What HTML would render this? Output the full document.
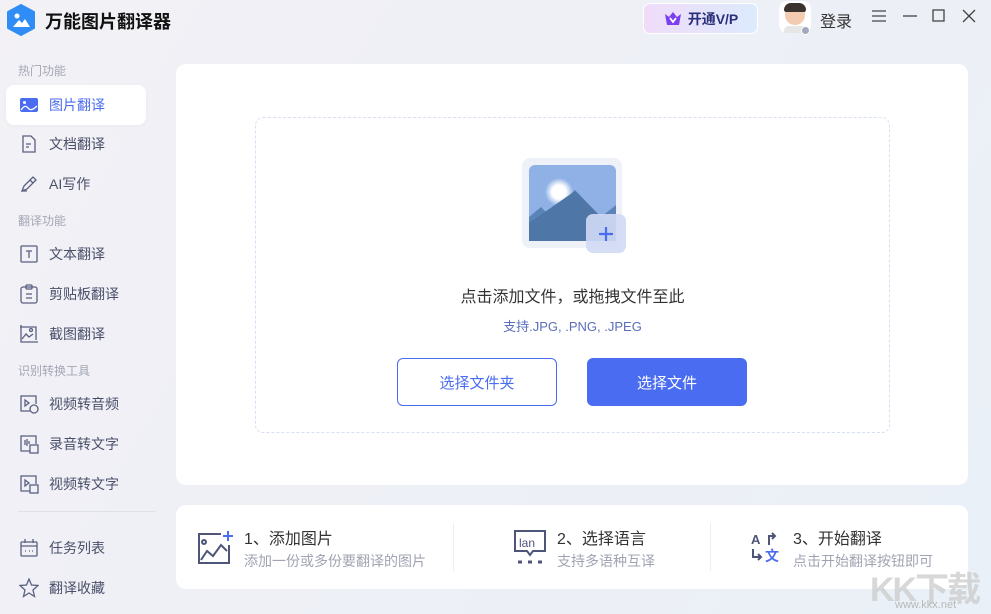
<!DOCTYPE html>
<html><head><meta charset="utf-8"><style>
*{margin:0;padding:0;box-sizing:border-box}
body{width:991px;height:614px;overflow:hidden;font-family:"Liberation Sans","Noto Sans CJK SC",sans-serif;background:linear-gradient(120deg,#f3f1f6 0%,#eef0f6 40%,#eaf0f7 100%);position:relative;color:#333}
.abs{position:absolute}
.sec{position:absolute;left:18px;font-size:12px;color:#a3a7b4}
.item{position:absolute;left:6px;width:140px;height:40px;border-radius:8px;display:flex;align-items:center;padding-left:13px;font-size:14px;color:#4a4f6a}
.item svg{width:20px;height:20px;margin-right:10px;flex:none}
.item.act{background:#fff;color:#4a6cf0;box-shadow:0 1px 4px rgba(0,0,0,.04)}
.card{position:absolute;background:#fff;border-radius:10px}
.btn{position:absolute;width:160px;height:48px;border-radius:6px;font-size:15px;display:flex;align-items:center;justify-content:center}
.step{position:absolute;top:525px}
.step .t{font-size:16px;color:#333}
.step .s{font-size:14px;color:#a0a4b2;margin-top:2px}
</style></head><body>
<svg class="abs" style="left:6px;top:4px" width="30" height="32" viewBox="0 0 30 32"><path d="M15 1 L28 8 L28 24 L15 31 L2 24 L2 8Z" fill="#2f8df5" stroke="#2f8df5" stroke-width="2" stroke-linejoin="round"/><circle cx="11" cy="12" r="2.5" fill="#fff"/><path d="M7 23 L13 16 L16 19 L19 15 L24 23Z" fill="#fff"/></svg>
<div class="abs" style="left:45px;top:8px;font-size:18px;font-weight:bold;color:#111">万能图片翻译器</div>
<div class="abs" style="left:643px;top:3px;width:115px;height:31px;border-radius:7px;background:linear-gradient(90deg,#f0dcfa,#dceafc);display:flex;align-items:center;justify-content:center;font-weight:bold;font-size:14px;color:#2a2f7a;border:1px solid #fff"><svg width="20" height="16" viewBox="0 0 20 16" style="margin-right:5px"><path d="M2 3 L6 6 L10 1 L14 6 L18 3 L16 14 L4 14Z" fill="#7b3ff0"/><path d="M7 7 L10 11 L13 7" stroke="#fff" stroke-width="1.8" fill="none"/></svg>开通V/P</div>
<div class="abs" style="left:779px;top:1px;width:32px;height:32px;border-radius:8px;background:#fff;overflow:hidden"><div class="abs" style="left:6px;top:4px;width:20px;height:20px;border-radius:50%;background:#f3cbb1"></div><div class="abs" style="left:5px;top:2px;width:22px;height:9px;border-radius:10px 10px 3px 3px;background:#3a3330"></div><div class="abs" style="left:5px;top:25px;width:22px;height:10px;border-radius:8px;background:#e6e6e6"></div></div>
<div class="abs" style="left:801px;top:26px;width:9px;height:9px;border-radius:50%;background:#a0a8bc;border:1px solid #fff"></div>
<div class="abs" style="left:820px;top:8px;font-size:16px;color:#333">登录</div>
<svg class="abs" style="left:871px;top:9px" width="16" height="14"><path d="M1 2H15M1 7H15M1 12H15" stroke="#444" stroke-width="1.3"/></svg>
<svg class="abs" style="left:902px;top:9px" width="16" height="14"><path d="M1 7H15" stroke="#444" stroke-width="1.3"/></svg>
<svg class="abs" style="left:932px;top:9px" width="14" height="14"><rect x="1" y="1" width="11" height="11" stroke="#444" stroke-width="1.3" fill="none"/></svg>
<svg class="abs" style="left:962px;top:9px" width="14" height="14"><path d="M1 1L13 13M13 1L1 13" stroke="#444" stroke-width="1.3"/></svg>
<div class="sec" style="top:62px">热门功能</div>
<div class="item act" style="top:85px"><svg viewBox="0 0 20 20"><rect x="1" y="3" width="18" height="14" rx="2" fill="#4a6cf0"/><circle cx="5.5" cy="7.5" r="1.5" fill="#fff"/><path d="M2 15 Q6 9 9 13 T18 11" stroke="#fff" stroke-width="1.3" fill="none"/></svg>图片翻译</div>
<div class="item" style="top:124px"><svg viewBox="0 0 20 20" fill="none" stroke="#5a6080" stroke-width="1.3"><path d="M4 2H12L16 6V18H4Z"/><path d="M7 10H12M7 13H10"/></svg>文档翻译</div>
<div class="item" style="top:164px"><svg viewBox="0 0 20 20" fill="none" stroke="#5a6080" stroke-width="1.3"><path d="M3 17L5 12L14 3L17 6L8 15Z M3 17H8 M11 6L14 9"/></svg>AI写作</div>
<div class="sec" style="top:212px">翻译功能</div>
<div class="item" style="top:234px"><svg viewBox="0 0 20 20" fill="none" stroke="#5a6080" stroke-width="1.3"><rect x="2" y="2" width="16" height="16" rx="1"/><path d="M7 7H13M10 7V14"/></svg>文本翻译</div>
<div class="item" style="top:274px"><svg viewBox="0 0 20 20" fill="none" stroke="#5a6080" stroke-width="1.3"><rect x="2" y="3" width="16" height="16" rx="2"/><rect x="7" y="1" width="6" height="4" rx="1"/><path d="M7 10H13M7 14H13"/></svg>剪贴板翻译</div>
<div class="item" style="top:314px"><svg viewBox="0 0 20 20" fill="none" stroke="#5a6080" stroke-width="1.3"><path d="M2 1V18H19M1 3H17V16"/><path d="M3 15L7 10L10 13L14 10"/><circle cx="12" cy="6" r="1.5"/></svg>截图翻译</div>
<div class="sec" style="top:362px">识别转换工具</div>
<div class="item" style="top:384px"><svg viewBox="0 0 20 20" fill="none" stroke="#5a6080" stroke-width="1.3"><path d="M11 17H2V2H17V10"/><path d="M6 6L10 9L6 12Z"/><circle cx="15" cy="15" r="4"/></svg>视频转音频</div>
<div class="item" style="top:424px"><svg viewBox="0 0 20 20" fill="none" stroke="#5a6080" stroke-width="1.3"><path d="M11 17H2V2H17V10"/><path d="M6 6V11M8 5V12M10 7V10"/><rect x="11" y="11" width="8" height="8"/></svg>录音转文字</div>
<div class="item" style="top:464px"><svg viewBox="0 0 20 20" fill="none" stroke="#5a6080" stroke-width="1.3"><path d="M11 17H2V2H17V10"/><path d="M6 6L10 9L6 12Z"/><rect x="11" y="11" width="8" height="8"/></svg>视频转文字</div>
<div class="abs" style="left:18px;top:511px;width:138px;height:1px;background:#dde2ea"></div>
<div class="item" style="top:528px"><svg viewBox="0 0 20 20" fill="none" stroke="#5a6080" stroke-width="1.3"><rect x="2" y="4" width="16" height="14" rx="1"/><path d="M2 8H18M6 1V5M14 1V5M6 13H7M10 13H11M13 13H14"/></svg>任务列表</div>
<div class="item" style="top:568px"><svg viewBox="0 0 20 20" fill="none" stroke="#5a6080" stroke-width="1.3"><path d="M10 1L12.5 7L19 7.5L14 12L15.5 18.5L10 15L4.5 18.5L6 12L1 7.5L7.5 7Z"/></svg>翻译收藏</div>
<div class="card" style="left:176px;top:64px;width:792px;height:421px"></div>
<div class="abs" style="left:255px;top:117px;width:635px;height:316px;border:1px dashed #d6dff5;border-radius:8px"></div>
<div class="abs" style="left:522px;top:158px;width:100px;height:90px;border-radius:8px;background:#eef1f7"></div>
<svg class="abs" style="left:529px;top:165px" width="87" height="76" viewBox="0 0 87 76"><defs><radialGradient id="g"><stop offset=".5" stop-color="#fff"/><stop offset="1" stop-color="#fff" stop-opacity="0"/></radialGradient></defs><rect width="87" height="76" rx="6" fill="#8fb1e6"/><circle cx="30" cy="27" r="14" fill="url(#g)"/><path d="M0 52L12 42L20 50L46 25L72 52L87 40V76H0Z" fill="#5a84b8"/><path d="M0 76V58L46 26L80 60L87 76Z" fill="#4e77a8"/></svg>
<div class="abs" style="left:586px;top:214px;width:40px;height:39px;border-radius:7px;background:rgba(210,218,245,.9)"></div>
<svg class="abs" style="left:596px;top:224px" width="20" height="20"><path d="M10 3V17M3 10H17" stroke="#4a6cf0" stroke-width="2.2"/></svg>
<div class="abs" style="left:255px;width:635px;top:283px;text-align:center;font-size:16px;color:#333">点击添加文件，或拖拽文件至此</div>
<div class="abs" style="left:255px;width:635px;top:316px;text-align:center;font-size:13px;color:#5a6fb8">支持.JPG, .PNG, .JPEG</div>
<div class="btn" style="left:397px;top:358px;border:1px solid #4a6cf0;color:#4a6cf0;background:#fff">选择文件夹</div>
<div class="btn" style="left:587px;top:358px;background:#4a6cf0;color:#fff">选择文件</div>
<div class="card" style="left:176px;top:505px;width:792px;height:84px"></div>
<div class="abs" style="left:453px;top:523px;width:1px;height:48px;background:#eceef2"></div>
<div class="abs" style="left:710px;top:523px;width:1px;height:48px;background:#eceef2"></div>
<svg class="abs" style="left:197px;top:529px" width="40" height="36" viewBox="0 0 40 36" fill="none" stroke="#4e5578" stroke-width="2"><path d="M24 5H2V34H32V16"/><circle cx="7" cy="13" r="2"/><path d="M4 31L10 22L16 27L24 16L30 22"/><path d="M31 2V12M26 7H36" stroke="#4a6cf0"/></svg>
<div class="step" style="left:244px"><div class="t">1、添加图片</div><div class="s">添加一份或多份要翻译的图片</div></div>
<svg class="abs" style="left:513px;top:529px" width="34" height="36" viewBox="0 0 34 36" fill="none" stroke="#4e5578" stroke-width="2"><path d="M2 2H32V22H20L17 26L14 22H2Z"/><text x="6" y="18" font-size="12" fill="#4e5578" stroke="none" font-family="Liberation Sans">lan</text><path d="M5 33H9M15 33H19M25 33H29" stroke-width="3"/></svg>
<div class="step" style="left:557px"><div class="t">2、选择语言</div><div class="s">支持多语种互译</div></div>
<svg class="abs" style="left:749px;top:529px" width="34" height="36" viewBox="0 0 34 36" fill="none" stroke="#4e5578" stroke-width="2"><text x="2" y="15" font-size="13" font-weight="bold" fill="#4e5578" stroke="none" font-family="Liberation Sans">A</text><path d="M20 16V7H26M23 4L26 7L23 10"/><path d="M4 20V28H12M9 25L12 28L9 31"/><text x="16" y="32" font-size="14" font-weight="bold" fill="#4a6cf0" stroke="none" font-family="Noto Sans CJK SC">文</text></svg>
<div class="step" style="left:793px"><div class="t">3、开始翻译</div><div class="s">点击开始翻译按钮即可</div></div>
<div class="abs" style="left:870px;top:562px;font-size:34px;font-weight:bold;color:rgba(200,200,200,.7);letter-spacing:-2px">KK下载</div>
<div class="abs" style="left:895px;top:599px;font-size:11px;color:#b8b8b8">www.kkx.net</div>
</body></html>
